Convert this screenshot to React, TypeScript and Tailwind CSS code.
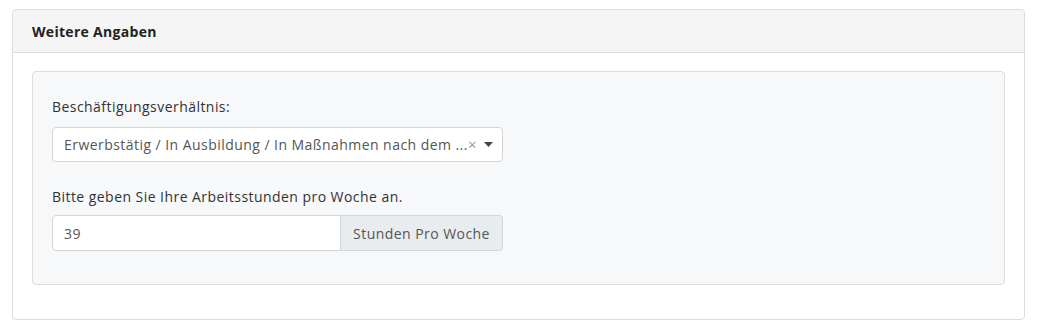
import React from "react";

export default function App() {
  return (
    <div className="w-[1041px] h-[335px] bg-white pt-[9px] pl-[12px] pr-[16px] text-[#333]" style={{ fontFamily: "'Open Sans', Lato, sans-serif" }}>
      <div className="border border-[#dddddd] rounded-[4px] bg-white">
        <div className="h-[43px] bg-[#f5f5f5] border-b border-[#dddddd] rounded-t-[4px] px-[19px] flex items-center">
          <span className="text-[14px] font-bold text-[#222] tracking-[0.3px]">Weitere Angaben</span>
        </div>
        <div className="px-[19px] pt-[18px] pb-[34px]">
          <div className="bg-[#f7f8fa] border border-[#dddddd] rounded-[4px] px-[19px] pt-[25px] pb-[33px] tracking-[0.45px]">
            <div className="text-[14px] leading-[20px] mb-[10px]">Beschäftigungsverhältnis:</div>
            <div className="w-[451px] h-[35px] bg-white border border-[#d5d5d5] rounded-[4px] flex items-center pl-[11px] pr-[9px] text-[14px] text-[#555]">
              <span className="whitespace-nowrap overflow-hidden">Erwerbstätig / In Ausbildung / In Maßnahmen nach dem ...</span>
              <span className="text-[#999] text-[15px] leading-none">×</span>
              <span className="flex-1" />
              <svg width="9" height="5" viewBox="0 0 9 5" className="text-[#444]"><path d="M0 0 L9 0 L4.5 5 Z" fill="currentColor" /></svg>
            </div>
            <div className="text-[14px] leading-[20px] mt-[25px] mb-[8px]">Bitte geben Sie Ihre Arbeitsstunden pro Woche an.</div>
            <div className="w-[451px] h-[36px] flex text-[14px] text-[#555]">
              <div className="flex-1 bg-white border border-[#d5d5d5] rounded-l-[4px] flex items-center pl-[11px]">39</div>
              <div className="w-[162px] bg-[#e9ecef] border border-l-0 border-[#d5d5d5] rounded-r-[4px] flex items-center justify-center">Stunden Pro Woche</div>
            </div>
          </div>
        </div>
      </div>
    </div>
  );
}
